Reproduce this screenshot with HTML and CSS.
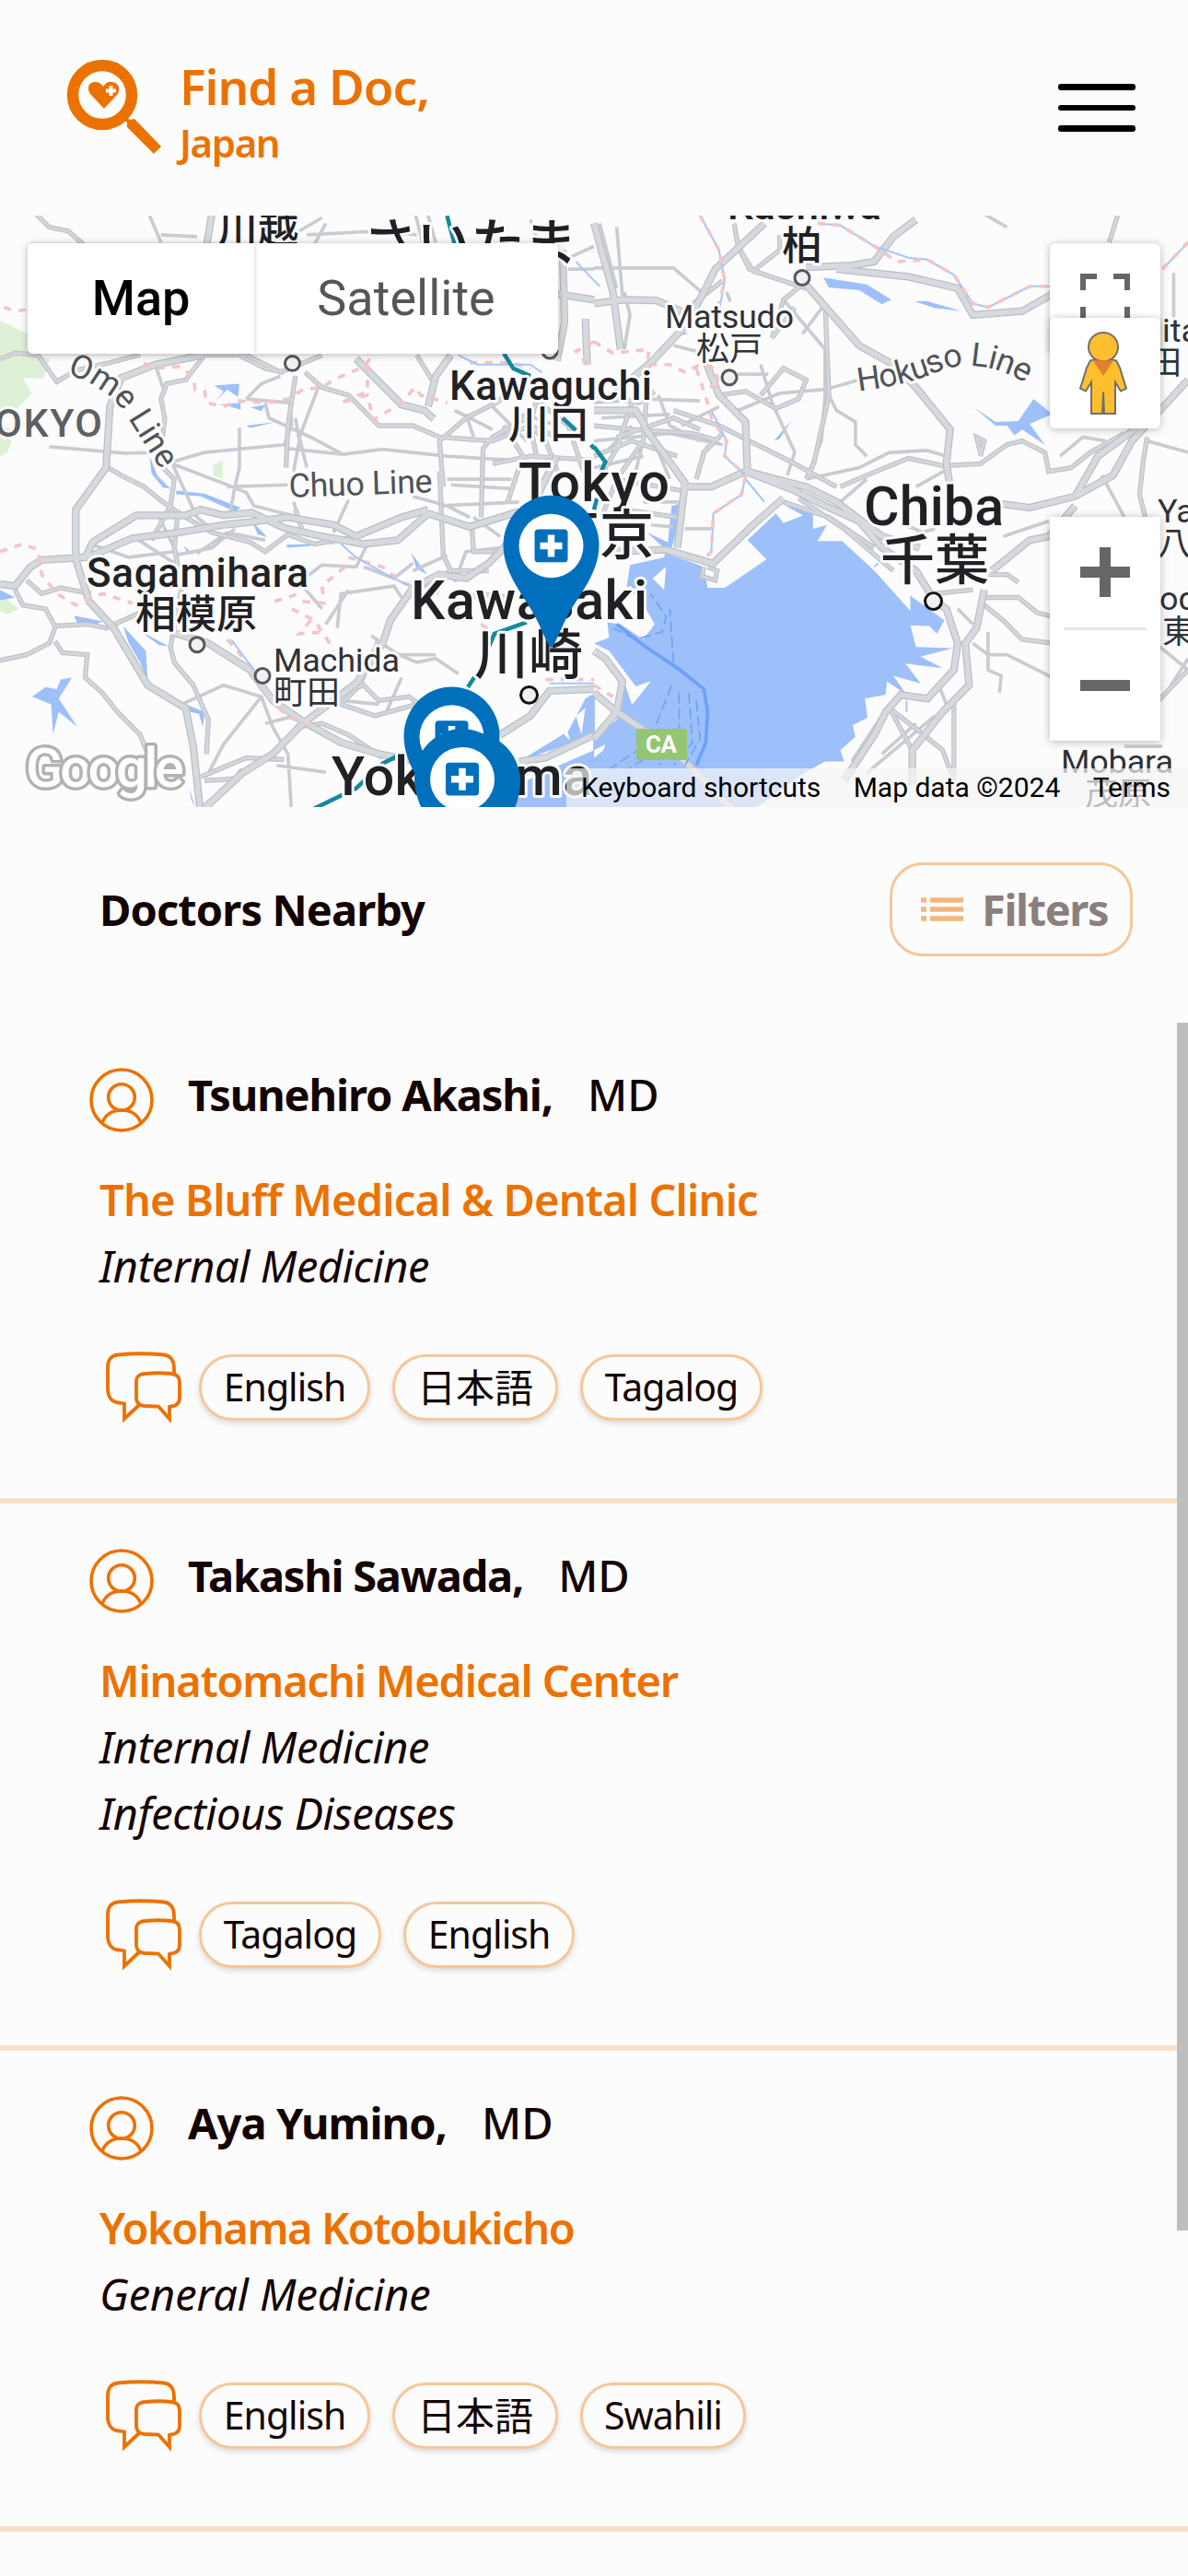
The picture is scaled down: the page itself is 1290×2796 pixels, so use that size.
FILE: index.html
```html
<!DOCTYPE html>
<html lang="en">
<head>
<meta charset="utf-8">
<title>Find a Doc, Japan</title>
<link rel="stylesheet" href="styles.css">
</head>
<body>
<svg class="sprite" width="0" height="0" aria-hidden="true">
  <symbol id="avatar" viewBox="0 0 70 70"><g fill="none" stroke="#ec7200" stroke-width="3.6"><circle cx="35" cy="35" r="33"/><circle cx="35" cy="32" r="14.3"/><path d="M14 59.500C18 50 26 46 35 46S52 50 56 59.500"/></g></symbol>
  <symbol id="chat" viewBox="0 0 84 80"><g fill="none" stroke="#ec7200" stroke-width="3.8"><path d="M75 23V18C75 9 70 4 64 3.500Q39 1 14 3.500C7 4 3 9 3 17V40C3 50 8 55 15 55.500L21 56.500V73L37 58"/><path d="M44 24Q58 22.500 72 24C78 24.500 81 28 81 33V50C81 56 78 59 72 59.500L70 60V73L58 59.500L43 59C37 58.500 34 56 34 50V33C34 27 37 24.500 44 24Z"/></g></symbol>
  <symbol id="pin" viewBox="-56 -56 112 172"><path d="M0 112C-5 106-10 92-16 80C-27 57-52 32-52-1A52 54 0 0 1 52-1C52 32 27 57 16 80C10 92 5 106 0 112Z" fill="#0070bd"/><circle r="35" fill="#fff"/><rect x="-18" y="-18" width="36" height="36" rx="4" fill="#0070bd"/><path d="M-12 0H12M0-12V12" stroke="#fff" stroke-width="7.500"/></symbol>
</svg>

<header class="header">
  <div class="brand">
    <svg class="brand-icon" viewBox="0 0 104 104"><circle cx="39" cy="39" r="32" fill="none" stroke="#ec7200" stroke-width="12.500"/><path d="M64 62L69 66L74 65L103 95L95 103L66 74L66 69L61 65Z" fill="#ec7200"/><path d="M41 54L27 39C22 34 23 25 31 25Q37 25 40 30Q44 24 50 25C58 26 59 34 55 39Z" fill="#ec7200"/><path d="M43 34.500H54M48.500 29V40" stroke="#fcfcfc" stroke-width="4"/></svg>
    <div class="brand-text"><span class="brand-name">Find a Doc,</span><span class="brand-country">Japan</span></div>
  </div>
  <div class="menu"><i></i><i></i><i></i></div>
</header>

<section class="map">
<svg class="map-canvas" viewBox="0 0 1290 646.500" width="1290" height="642" preserveAspectRatio="none">
  <defs>
    <g id="west-major">
      <path d="M0 975L40 980L80 930L110 912L225 905L245 865L360 795L490 795L530 780L590 795L665 788L750 828L850 850L960 870L1050 860L1130 790L1240 825L1370 785"/>
      <path d="M535 375L410 400L320 435L290 510L280 670L200 780L200 910L235 1020L300 1090L390 1240L490 1300L510 1400L530 1580"/>
      <path d="M230 905L350 855L470 840L590 820L680 810L760 800L880 820L940 850L1060 800L1130 780"/>
      <path d="M450 1100L550 1130L660 1200L720 1280L800 1335L900 1390L1000 1420L1100 1440"/>
      <path d="M520 1580L640 1470L720 1420L800 1340L940 1235L1010 1130L1030 1070L1090 985L1160 950L1230 960L1290 920L1370 840L1470 640"/>
      <path d="M940 385L1060 505L1120 520L1145 542M1190 375L1150 430L1130 510"/>
      <path d="M1485 100L1490 290L1470 390M1470 215L1568 230M1545 280L1550 400"/>
      <path d="M560 0L545 90M1320 1370L1400 1320L1450 1255L1568 1250M1370 1440L1440 1430L1568 1370"/>
    </g>
    <g id="west-mid">
      <path d="M0 385L40 370L100 375L150 445L200 415L290 395L370 374M540 375L490 440L440 450L425 490L435 540L425 620M430 670L460 700L450 770L400 860M90 0L130 40L180 50L220 85"/>
      <path d="M70 965L110 1000L160 985L240 1000M40 990L60 1030L120 1040L145 1085L230 1080L280 1090L370 1050M145 1090L130 1130L70 1160L0 1175"/>
      <path d="M145 1125L165 1155L230 1160L225 1220L270 1260L310 1310L370 1370L390 1420M470 780L460 880L480 980L450 1140L460 1180L510 1240L550 1330L545 1420"/>
      <path d="M285 670L320 690L380 720L430 760L490 800L560 840L660 865L700 890L760 845L830 870L950 850"/>
      <path d="M780 430L760 560L755 670M805 420L850 460L920 480L1000 560L1090 560L1160 590L1300 600L1400 560L1470 590"/>
      <path d="M630 375L700 410L750 420M540 375L650 375L740 420L850 375M1100 375L1140 440M1170 720L1160 600L1230 540L1310 500L1350 470M1160 680L1170 900L1200 960"/>
      <path d="M1270 800L1275 620L1300 590L1390 540M1245 820L1250 890L1320 890L1370 810M780 780L800 840L850 850M1080 1000L1190 940L1290 940"/>
      <path d="M930 1250L960 1240L1000 1280L1080 1270L1120 1300M1000 1120L950 1240L900 1290L990 1320L1100 1290M780 1350L850 1340L920 1370L1010 1430M530 1480L650 1430L750 1435M540 1490L620 1485L640 1460"/>
      <path d="M1330 560L1380 640L1340 760M1360 520L1440 600L1480 700M1400 480L1500 560L1540 680M1300 660L1400 640L1568 650M1420 470L1400 560L1420 660M1200 1040L1260 1000L1350 1010"/>
    </g>
    <g id="east-major">
      <path d="M450 30L320 150L290 210L240 300L155 390L60 470M0 30L50 210L70 360M0 240L80 230L165 232L230 260"/>
      <path d="M550 180L700 350L790 400L850 460L940 570L930 660L945 750M560 145L680 140L740 130L790 65L850 20M640 150L830 170L960 200L1000 270L1130 260L1210 215"/>
      <path d="M290 380L330 480L400 550L405 680M130 560L240 710L220 880M0 520L110 520L135 560M230 720L310 720L400 680L530 730L610 770L700 810L760 880L850 940L900 1020"/>
      <path d="M310 925L420 820L500 750M50 890L190 885L310 920M405 680L480 700L560 720L640 760L760 850L860 880"/>
      <path d="M1075 765L1150 775L1270 745L1370 690L1420 600L1568 440M1270 745L1330 640L1440 560M1050 940L1150 860L1200 850L1270 770"/>
      <path d="M900 1020L930 1040L960 1130L950 1200L880 1275L810 1265L770 1310L740 1370L660 1490M1030 990L1010 1090L980 1130L990 1240L920 1310L840 1410L840 1500"/>
      <path d="M0 1380L60 1310L75 1230L30 1170L0 1150M0 1260L60 1310L150 1370L230 1430L380 1580"/>
    </g>
    <g id="east-mid">
      <path d="M340 180L210 280M380 90L420 155L560 200M370 30L380 90L410 150L540 195M420 155L490 100L490 60M550 190L500 230L470 330L530 250"/>
      <path d="M330 480L400 470L480 515L540 490L560 440L500 410L440 480M210 520L330 560L530 660L640 720M0 560L100 570L260 580L330 600"/>
      <path d="M650 720L720 690L830 645L920 665L1020 660L1090 610L1130 600L1190 630L1200 680L1260 670L1310 630L1400 580M1020 630L1010 590L1030 600L1020 640"/>
      <path d="M1030 1010L1120 1010L1170 1050L1210 1060M1030 1030L1080 1070L1130 1120L1210 1130M780 1300L870 1370L920 1410L950 1490M950 1290V1480M840 1410L780 1300"/>
      <path d="M610 240L620 480L580 660L560 700M1460 590L1450 650L1440 740L1460 820M1568 1200L1490 1280M1360 80L1385 0"/>
      <path d="M270 700L290 630L340 580M60 590L210 540L280 570M290 930L285 955L320 965L325 940L300 930M900 1000L1000 990M1040 950L1090 950L1120 970"/>
      <path d="M0 480L120 500L160 470M140 470L130 600L60 700L20 800M100 500L60 620L0 720M0 640L100 600L220 640M60 700L230 730M80 780L220 800M500 760L620 800L740 880M540 750L660 830L790 940"/>
    </g>
  </defs>
  <rect width="1290" height="651" fill="#fcfcfd"/>

  <!-- western half: Tama, Sagamihara, Yokohama -->
  <g transform="translate(0 -4) scale(.4114 .4172)">
    <path class="park" d="M0 285L75 320V371L130 385L115 437L60 435L85 475L45 515L0 550V285M0 560L40 570L20 630L0 640M562 665L588 650V700L562 690M0 1000L50 1040L20 1055L0 1045"/>
    <path class="water" d="M565 455L632 450L628 485L600 465L570 495L590 470ZM575 505L635 500V518L600 508ZM662 512L700 505L690 522ZM650 560L730 550L660 566ZM395 640L415 690L450 725L430 722L400 685ZM465 730L540 738L635 775L620 785L530 745L465 740ZM665 810L705 852L680 845ZM755 872L900 868L760 880ZM85 1270L120 1245L150 1250L160 1225L190 1220L155 1275L205 1350L155 1310L140 1368L135 1290ZM195 1058L270 1072L240 1088L205 1078ZM325 1085L385 1150L390 1230L370 1180L340 1130ZM365 1095L445 1138L420 1135ZM465 1280L540 1310L535 1350L525 1315L480 1305ZM0 990L40 1010L0 1018ZM485 875L512 897L495 895ZM500 1510L515 1560L505 1540ZM1085 893L1128 950L1100 935Z"/>
    <path class="water" d="M1345 1580L1370 1440L1500 1360L1545 1275L1570 1260V1580Z"/>
    <path fill="#fcfcfd" d="M1370 1440L1568 1370V1410L1430 1470L1350 1510ZM1400 1370L1420 1350L1430 1395ZM1470 1350L1490 1330L1505 1385ZM1520 1320L1545 1300L1535 1370Z"/>
    <path class="minor" d="M130 615L330 632L420 630M455 655L540 630L750 610L770 560M760 620L905 635L1010 622L1180 640L1350 650M455 660L600 715L650 735L670 770L790 800M600 720L760 715M632 565V670L620 720L605 800M455 660L520 800L560 830M700 500L710 540L820 590L905 635M650 490L690 450L740 430M650 490L765 500L770 560M840 460L790 590L810 670M780 540L790 600L775 680M920 755L880 840M775 760L800 840M1090 745L1180 770L1240 800M1180 700L1350 700M1190 715L1350 725M410 400L430 460M425 60L520 65M395 10L425 80M790 50L850 15M810 60L1000 50L1100 60M860 30L830 85M1095 0L1115 80M1130 10L1150 80M1400 20L1420 80M1500 150H1568M1480 130L1568 90M240 870L340 905L460 890M350 850L460 920M420 800L470 900M390 1060L460 1040M460 900L560 880L620 830M520 895L600 840L700 860M480 1290L590 1240L690 1270L590 1395L545 1480M690 1270L720 1350L760 1420L770 1580M700 1340L780 1320M730 1450L860 1468M890 1090L900 1000L1040 980L1060 1010M850 1040L790 970L850 925L940 930L970 870M960 930L1040 960L1090 920M860 1080L920 990M980 1110L1050 1160L1150 1160M1030 1150L1100 1180L1150 1170L1210 1210M1060 1220L1020 1310M900 1280L1000 1290M1180 900L1090 940M1200 970L1230 890L1320 880M1160 770L1370 760M1250 800L1320 850M1200 520L1300 570M1230 530L1250 590M1300 510L1390 600M1380 530L1470 560M1160 1420L1250 1400"/>
    <use href="#west-mid" fill="none" stroke="#c0c4c9" stroke-width="13"/><use href="#west-mid" fill="none" stroke="#d3d6da" stroke-width="7"/>
    <use href="#west-major" fill="none" stroke="#bbbfc4" stroke-width="20"/><use href="#west-major" fill="none" stroke="#d6d9dd" stroke-width="14"/>
    <path class="border" d="M10 250L40 260L73 255M380 395L400 410L470 405L510 430L515 465L540 470L545 500L590 510L630 495L700 500L760 490L800 465L850 460L880 440L960 405L985 375M970 400V470L900 500L970 480L985 545L1060 500L1095 460L1110 480L1180 500M0 890L60 870L100 885L110 950L150 1000L200 1030L270 1000L350 1025M600 1120L670 1200M735 1300L765 1325L830 1350M725 1020L790 1000M910 930L850 980L855 1025L790 1020M770 1040L830 1070L870 1130L880 1150M820 1070L790 1105L860 1100M920 905L1010 930L1060 970L1160 1000M1240 395H1350L1400 410M1270 1080L1310 1110M1568 340L1520 365L1550 400M1440 1225L1568 1225"/>
    <path class="stream" d="M900 870L940 905L1020 950L1080 980M1210 375L1260 400L1400 400L1430 420M610 1120L670 1200M1520 130L1568 180M1450 1235H1568"/>
    <path class="rail" d="M1180 10L1200 85M1330 371L1355 410L1400 430M1485 540L1520 572M1560 610L1568 620M1390 1075L1305 1105L1265 1200L1235 1245M1050 1425L1010 1445L940 1510L815 1570"/>
  </g>

  <!-- eastern half: Tokyo bay and Chiba -->
  <g transform="translate(645 -4) scale(.4114 .4172)">
    <path class="water" d="M205 770L225 765L220 830L205 880V900L250 915L290 930L300 985H345L455 910L405 860L480 790L500 815L552 795L505 770L578 780V830L615 820L590 862L655 862L740 940L835 1045V1005L925 1070L905 1105L885 1085L835 1083L850 1140L948 1143L862 1165L920 1195L822 1183L862 1235L790 1215L825 1265L773 1230L770 1265L715 1275L722 1325L683 1345L690 1375L650 1410L660 1440L610 1440L555 1470L400 1580H-2V1380L60 1330L75 1215L100 1292L150 1230L110 1243L40 1150L0 1130L40 1115L35 1075L70 1080L130 1120L160 1080L120 1010L85 990L95 925L185 905L190 885L140 840L195 865Z"/>
    <path fill="#fcfcfd" d="M155 960L190 930L185 990ZM50 990L100 980L95 1010ZM0 1410L30 1395L25 1410L0 1430ZM345 985L330 940L390 915L455 910Z"/>
    <path class="water" d="M605 172L720 190L785 230L760 242L700 205L620 198ZM845 234L880 234L970 260L900 252ZM1000 510L1060 550L1120 548L1160 490L1210 530L1150 555L1190 610L1130 570L1110 585L1090 560L1060 560ZM475 600L522 545L490 595ZM230 315L250 318L235 322Z"/>
    <path class="minor" d="M0 147H210L290 215M80 210L95 270L80 360M15 30L60 200M60 40L75 220M350 210L360 235M210 350L290 370M550 320L610 240M380 425L460 425M440 400L470 500L530 630L510 690M500 230L610 360L610 480L600 600L560 700M380 520L490 475L610 465L700 440M620 480L640 520L690 550L690 610L720 640M560 700L700 670L780 630L880 625L930 640M850 720L940 670M650 760L720 700M0 500L140 490L280 495M20 540L200 530M0 600L200 580L340 610M40 620L100 560M140 560L110 680M170 480L200 560L280 600M150 580L200 700M0 670L130 640M230 560L330 510M300 610L270 700M130 760H230M240 830H310M150 820L210 825M1340 690L1400 800M1460 600L1568 630M1230 640L1290 590L1350 600M1040 1100V1200L1075 1215L1070 1260M1000 1130L1040 1160L1090 1160L1210 1220M910 1240L930 1290M780 1290L680 1440M900 1320L720 1470M850 1340L760 1420M1500 1400L1400 1400M1530 160V280M1090 40L1020 0M960 1040L1000 1080M1080 850L1200 810M830 850L900 830M820 820L870 840M1470 1120L1568 1200M1510 1260L1568 1170"/>
    <use href="#east-mid" fill="none" stroke="#c0c4c9" stroke-width="13"/><use href="#east-mid" fill="none" stroke="#d3d6da" stroke-width="7"/>
    <use href="#east-major" fill="none" stroke="#bbbfc4" stroke-width="20"/><use href="#east-major" fill="none" stroke="#d6d9dd" stroke-width="14"/>
    <path class="stream" d="M280 10L330 100L345 180L330 260M590 30L650 35L740 90L830 120L880 125L950 165L1000 240L1040 250L1150 195L1210 195M310 520L350 600L345 640L400 690L390 740L315 790L310 890M400 700L450 760M1500 150L1568 80M0 180L15 195M740 930L750 920M825 1280V1310"/>
    <path class="border" d="M280 10L330 100L345 180L330 240M590 30L650 35L740 90L800 130L880 125L950 165L1000 240L1040 250L1150 195L1210 195M0 340L50 370L145 360L140 400L200 400L240 420L280 400L320 410L330 460L290 455M270 410L300 500L310 540L350 600L345 640L400 690L390 740L315 790L310 890L280 920M0 1240L50 1270M1500 150L1568 80"/>
    <path class="rail" d="M0 615L30 655L10 700M0 780L8 750"/>
    <path class="ferry" stroke-width="9" d="M60 1080L130 1135L220 1195L290 1250L300 1310L295 1390L270 1450"/>
    <path class="ferry" stroke-width="4" stroke-dasharray="28 12" d="M50 1090L110 1120L180 1100L190 1060L150 1000M210 1180L200 1040M205 1240L165 1340M225 1260V1380L170 1450M250 1260L260 1390L210 1450M270 1280L280 1380L240 1450M160 1380L40 1460M200 1390L90 1460"/>
  </g>

  <g class="dots"><circle cx="317.500" cy="161.500" r="8"/><circle cx="597" cy="148" r="8"/><circle cx="214" cy="469" r="8"/><circle cx="285" cy="503" r="8"/><circle class="dark" cx="574.500" cy="524" r="9"/><circle cx="871" cy="68" r="8"/><circle cx="792" cy="177" r="8"/><circle class="dark" cx="1013.500" cy="421.500" r="9"/></g>
  <rect x="691" y="561" width="55" height="34" fill="#93c572"/><text x="701" y="587" class="road-sign" textLength="34">CA</text>

  <g class="labels">
    <text class="region" x="-33" y="242" textLength="144">TOKYO</text>
    <path id="ome" fill="none" d="M72 173Q118 188 137 218L178 283"/><text class="line"><textPath href="#ome">Ome Line</textPath></text>
    <text class="line" x="314" y="308" textLength="156" transform="rotate(-2 314 308)">Chuo Line</text>
    <path id="hokuso" fill="none" d="M932 192Q985 186 1025 168Q1072 154 1124 190"/><text class="line"><textPath href="#hokuso" textLength="189">Hokuso Line</textPath></text>
    <text class="city" x="236" y="30">川越</text>
    <text class="metro" x="394" y="52" textLength="233">さいたま</text>
    <text class="city" x="790" y="4" textLength="167">Kashiwa</text><text class="city" x="849" y="48">柏</text>
    <text class="town" x="722" y="123" textLength="140">Matsudo</text><text class="town" x="756" y="158">松戸</text>
    <text class="city" x="488" y="201" textLength="220">Kawaguchi</text><text class="city" x="552" y="244">川口</text>
    <text class="metro" x="563" y="312" textLength="164">Tokyo</text><text class="metro" x="592" y="371">東京</text>
    <text class="metro" x="938" y="338" textLength="152">Chiba</text><text class="metro" x="956" y="398">千葉</text>
    <text class="city" x="94" y="406" textLength="241">Sagamihara</text><text class="city" x="147" y="451">相模原</text>
    <text class="town" x="297" y="498" textLength="137">Machida</text><text class="town" x="297" y="534">町田</text>
    <text class="metro" x="446" y="441" textLength="257">Kawasaki</text><text class="metro" x="515" y="501">川崎</text>
    <text class="metro" x="360" y="633" textLength="283">Yokohama</text>
    <text class="town" x="1262" y="138">ita</text><text class="town" x="1247" y="173">田</text>
    <text class="town" x="1257" y="335">Ya</text><text class="town" x="1257" y="371">八</text>
    <text class="town" x="1259" y="431">od</text><text class="town" x="1262" y="467">東</text>
    <text class="town" x="1152" y="609" textLength="122">Mobara</text><text class="town" x="1178" y="644">茂原</text>
  </g>
  <text class="google" x="28" y="624" textLength="172">Google</text>
  <use href="#pin" x="542.500" y="305" width="112" height="172"/>
  <use href="#pin" x="434.500" y="514" width="112" height="172"/>
  <use href="#pin" x="457" y="564" width="112" height="172"/>
  <use href="#pin" x="446" y="560" width="112" height="172"/>
</svg>
<div class="map-type"><span class="map-type-on">Map</span><span class="map-type-off">Satellite</span></div>
<div class="map-control fullscreen"><svg width="54" height="54" viewBox="0 0 54 54" fill="none" stroke="#666" stroke-width="6"><path d="M3 18V3H18M36 3H51V18M51 36V51H36M18 51H3V36"/></svg></div>
<div class="map-control pegman"><svg width="52" height="90" viewBox="0 0 52 92" preserveAspectRatio="none"><g fill="#fdbf2d" stroke="#70706c" stroke-width="2"><path d="M12 32Q26 27 40 32L44 40L51 63L45 66L39 56V91H27L26 67L25 91H13V56L7 66L1 63L8 40Z"/><circle cx="26" cy="17" r="16"/></g><path d="M15 32H37L26 49Z" fill="#e37f2e"/></svg></div>
<div class="map-control zoom"><svg width="54" height="54"><path d="M0 27H54M27 0V54" stroke="#666" stroke-width="12"/></svg><hr><svg width="54" height="54"><path d="M0 27H54" stroke="#666" stroke-width="12"/></svg></div>
<div class="map-legal"><span>Keyboard shortcuts</span><span>Map data ©2024</span><span>Terms</span></div>
</section>

<main>
<div class="toolbar">
  <h1>Doctors Nearby</h1>
  <div class="filters"><svg width="46" height="26" viewBox="0 0 46 26"><path d="M0 3H6M10 3H46M0 13H6M10 13H46M0 23H6M10 23H46" stroke="#f5b67c" stroke-width="5.500"/></svg><span>Filters</span></div>
</div>
<div class="results">
  <article class="card card-akashi">
    <div class="doctor"><svg class="avatar"><use href="#avatar"/></svg><b>Tsunehiro Akashi,</b><span>MD</span></div>
    <div class="clinic">The Bluff Medical &amp; Dental Clinic</div>
    <div class="specialty">Internal Medicine</div>
    <div class="languages"><svg class="chat"><use href="#chat"/></svg><span class="chip english">English</span><span class="chip japanese">日本語</span><span class="chip tagalog">Tagalog</span></div>
  </article>
  <article class="card card-sawada">
    <div class="doctor"><svg class="avatar"><use href="#avatar"/></svg><b>Takashi Sawada,</b><span>MD</span></div>
    <div class="clinic">Minatomachi Medical Center</div>
    <div class="specialty">Internal Medicine</div>
    <div class="specialty">Infectious Diseases</div>
    <div class="languages"><svg class="chat"><use href="#chat"/></svg><span class="chip tagalog">Tagalog</span><span class="chip english">English</span></div>
  </article>
  <article class="card card-yumino">
    <div class="doctor"><svg class="avatar"><use href="#avatar"/></svg><b>Aya Yumino,</b><span>MD</span></div>
    <div class="clinic">Yokohama Kotobukicho</div>
    <div class="specialty">General Medicine</div>
    <div class="languages"><svg class="chat"><use href="#chat"/></svg><span class="chip english">English</span><span class="chip japanese">日本語</span><span class="chip swahili">Swahili</span></div>
  </article>
  <div class="scrollbar"></div>
</div>
</main>
</body>
</html>
```
FILE: styles.css
```css
* { box-sizing: border-box; }
body { margin: 0; width: 1290px; height: 2796px; overflow: hidden; background: #fcfcfc; color: #130302; font-family: "Noto Sans", "Noto Sans CJK JP", sans-serif; white-space: nowrap; }
.sprite { position: absolute; }
svg { display: block; flex: none; }

.header { height: 234px; padding: 64px 57px 0 72px; display: flex; justify-content: space-between; align-items: flex-start; }
.brand { display: flex; gap: 19px; color: #ec7200; font-weight: 600; }
.brand-icon { width: 104px; height: 104px; }
.brand-text { display: flex; flex-direction: column; margin-top: -1px; }
.brand-name { font-size: 53px; line-height: 62px; letter-spacing: -1px; }
.brand-country { font-size: 42px; line-height: 60px; letter-spacing: -1.4px; }
.menu { display: flex; flex-direction: column; gap: 16px; padding-top: 27px; }
.menu i { width: 84px; height: 6.500px; border-radius: 3px; background: #000; }

.map { position: relative; height: 642px; overflow: hidden; font-family: Roboto, "Noto Sans CJK JP", sans-serif; }
.park { fill: #def1d6; }
.water { fill: #9dc0fa; }
.minor { fill: none; stroke: #c9cdd1; stroke-width: 9; stroke-linejoin: round; }
.border { fill: none; stroke: #f4c5c7; stroke-width: 9; stroke-dasharray: 20 20; }
.stream { fill: none; stroke: #a6c6fb; stroke-width: 5; }
.ferry { fill: none; stroke: #6da0f8; }
.rail { fill: none; stroke: #148a9c; stroke-width: 11; }
.dots circle { fill: #f1f1f1; stroke: #55585c; stroke-width: 3; }
.dots .dark { stroke: #111; }
.labels text { paint-order: stroke; stroke: #fcfcfd; stroke-width: 6px; stroke-linejoin: round; fill: #202124; }
.labels .town { font-size: 36px; fill: #303236; }
.labels .line { font-size: 36px; fill: #505458; }
.labels .city { font-size: 44px; font-weight: 500; }
.labels .metro { font-size: 59px; font-weight: 500; }
.labels .region { font-size: 43px; font-weight: 500; fill: #5c6064; }
.road-sign { font-size: 26px; font-weight: 700; fill: #fff; }
.google { font: 500 60px Roboto, sans-serif; fill: #fff; stroke: #b2b2b2; stroke-width: 7px; paint-order: stroke; stroke-linejoin: round; }
.map-type { position: absolute; left: 30px; top: 30px; display: flex; height: 120px; width: 576px; background: #fff; border-radius: 6px; box-shadow: 0 1px 9px rgba(0,0,0,.28); font-size: 54px; line-height: 120px; text-align: center; }
.map-type-on { width: 246px; font-weight: 500; color: #000; box-shadow: 2px 0 3px rgba(0,0,0,.1); }
.map-type-off { flex: 1; color: #565656; }
.map-control { position: absolute; left: 1140px; width: 120px; background: #fff; border-radius: 6px; box-shadow: 0 1px 9px rgba(0,0,0,.28); display: flex; flex-direction: column; align-items: center; }
.fullscreen { top: 30px; height: 120px; padding-top: 33px; }
.pegman { top: 111px; height: 120px; padding-top: 15px; padding-right: 4px; }
.zoom { top: 327px; height: 243px; padding: 33px 0; justify-content: space-between; border-radius: 0; }
.zoom hr { width: 90px; height: 3px; border: 0; margin: 0; background: #e6e6e6; }
.map-legal { position: absolute; right: 0; bottom: 0; display: flex; width: 675px; height: 42px; padding: 0 19px 0 16px; background: rgba(245,245,245,.7); color: #000; font-size: 30px; line-height: 42px; justify-content: space-between; }

.toolbar { height: 234px; padding: 60px 60px 0 108px; display: flex; align-items: flex-start; justify-content: space-between; }
h1 { margin: 21px 0 0; font-size: 47px; line-height: 60px; font-weight: 700; letter-spacing: -.9px; }
.filters { width: 264px; height: 102px; border: 3px solid #f7c698; border-radius: 36px; display: flex; align-items: center; padding: 0 0 0 31px; gap: 20px; color: #8a7f7e; font-size: 47px; font-weight: 700; letter-spacing: -1.4px; }
.results { position: relative; height: 1686px; }
.scrollbar { position: absolute; right: 0; top: 0; width: 12px; height: 1311px; background: #bebebe; }
.card { border-bottom: 6px solid #fae0ca; padding: 48px 0 84px 108px; }
.doctor { display: flex; height: 108px; margin-left: -11px; font-size: 47px; line-height: 60px; }
.doctor b { margin: 0 38px 0 37px; }
.doctor span { font-weight: 500; }
.avatar { width: 70px; height: 70px; margin-top: 1px; }
.clinic { height: 72px; line-height: 72px; font-size: 47px; font-weight: 600; color: #ec7200; }
.card-akashi b { letter-spacing: -1.1px; }
.card-sawada b { letter-spacing: -1.25px; }
.card-yumino b { letter-spacing: -.95px; }
.card-akashi .clinic { letter-spacing: -.85px; }
.card-sawada .clinic { letter-spacing: -1.2px; }
.card-yumino .clinic { letter-spacing: -1.45px; }
.specialty { height: 72px; line-height: 72px; font-size: 47px; font-style: italic; letter-spacing: -.4px; }
.card-yumino .specialty { letter-spacing: -.1px; }
.languages { display: flex; height: 72px; margin-top: 60px; padding-left: 6px; }
.chat { width: 84px; height: 80px; margin: -3px 18px 0 0; }
.chip { height: 72px; margin-right: 24px; border: 3px solid #f7c698; border-radius: 36px; text-align: center; font-size: 41px; line-height: 65px; letter-spacing: -1px; box-shadow: 0 3px 6px rgba(0,0,0,.14); }
.english { width: 186px; }
.japanese { width: 180px; letter-spacing: 0; font-size: 42px; line-height: 62px; font-weight: 400; font-family: "Noto Sans CJK JP", sans-serif; }
.tagalog { width: 198px; }
.swahili { width: 180px; }
```
